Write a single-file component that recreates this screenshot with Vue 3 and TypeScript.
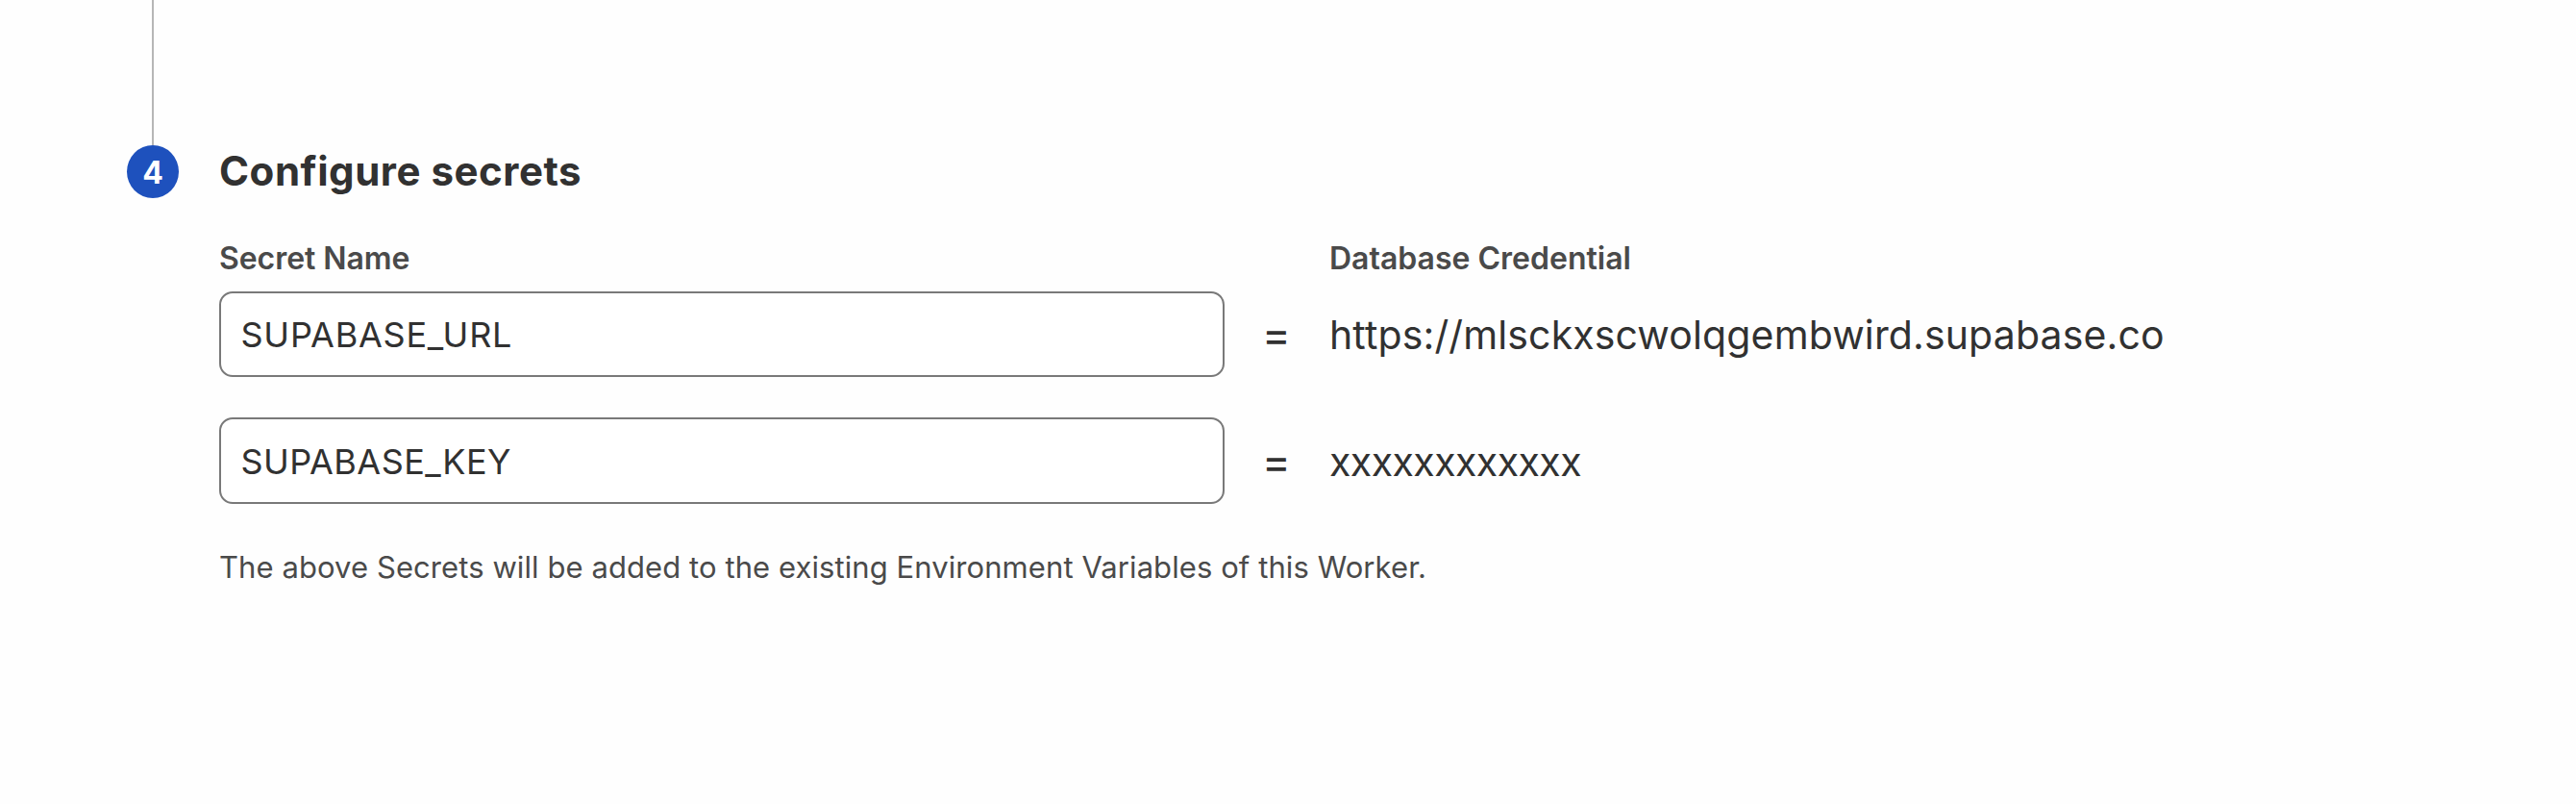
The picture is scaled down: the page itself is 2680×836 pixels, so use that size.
<script setup lang="ts">
import { reactive } from 'vue'

interface Secret {
  id: string
  name: string
  credential: string
}

const step = 4
const secrets = reactive<Secret[]>([
  { id: 'url', name: 'SUPABASE_URL', credential: 'https://mlsckxscwolqgembwird.supabase.co' },
  { id: 'key', name: 'SUPABASE_KEY', credential: 'xxxxxxxxxxxx' },
])
</script>

<template>
  <section class="step">
    <div class="rail">
      <div class="line"></div>
      <div class="badge">{{ step }}</div>
    </div>
    <div class="content">
      <h2 class="title">Configure secrets</h2>
      <div class="grid labels">
        <span class="label name-label">Secret Name</span>
        <span></span>
        <span class="label">Database Credential</span>
      </div>
      <div v-for="s in secrets" :key="s.id" class="grid row" :class="s.id">
        <input v-model="s.name" class="field" type="text" spellcheck="false" />
        <span class="equals">=</span>
        <span class="credential">{{ s.credential }}</span>
      </div>
      <p class="note">The above Secrets will be added to the existing Environment Variables of this Worker.</p>
    </div>
  </section>
</template>

<style>
body {
  margin: 0;
  background: #fefefe;
}
</style>

<style scoped>
.step {
  display: flex;
  gap: 42px;
  box-sizing: border-box;
  height: 836px;
  padding-left: 132px;
  overflow: hidden;
  background: #fefefe;
  color: #313131;
  font-family: Inter, "Liberation Sans", sans-serif;
}
.rail {
  display: flex;
  flex-direction: column;
  align-items: center;
  width: 54px;
}
.line {
  width: 2px;
  height: 151px;
  background: #b6b6b6;
}
.badge {
  width: 54px;
  height: 55px;
  border-radius: 50%;
  background: #1e51bd;
  color: #fff;
  font-size: 32px;
  font-weight: 700;
  line-height: 57px;
  text-align: center;
}
.content {
  flex: 1;
  padding-top: 151px;
}
.title {
  margin: 0;
  font-size: 42px;
  font-weight: 700;
  line-height: 54px;
  letter-spacing: 0.53px;
}
.grid {
  display: grid;
  grid-template-columns: 1046px 109px 1fr;
}
.labels {
  margin: 44px 0 14px;
}
.label {
  color: #4a4a4a;
  font-size: 32px;
  font-weight: 600;
  line-height: 40px;
}
.name-label {
  letter-spacing: -0.06px;
}
.row {
  align-items: center;
  height: 89px;
  line-height: 50px;
}
.key {
  height: 90px;
  margin-top: 42px;
}
.field {
  box-sizing: border-box;
  width: 100%;
  height: 100%;
  margin: 0;
  padding: 0 20.5px;
  border: 2px solid #797979;
  border-radius: 14px;
  outline: none;
  background: #fff;
  color: inherit;
  font: 400 36px Inter, "Liberation Sans", sans-serif;
  letter-spacing: 0.77px;
}
.key .field {
  padding-top: 2px;
  letter-spacing: 0.45px;
}
.equals {
  padding-left: 39px;
  font-size: 45px;
}
.credential {
  font-size: 41px;
  letter-spacing: 0.13px;
}
.key .equals,
.key .credential {
  padding-top: 2px;
}
.key .credential {
  letter-spacing: -0.55px;
}
.note {
  margin: 46px 0 0;
  color: #4a4a4a;
  font-size: 31px;
  line-height: 40px;
  letter-spacing: 0.08px;
}
</style>
